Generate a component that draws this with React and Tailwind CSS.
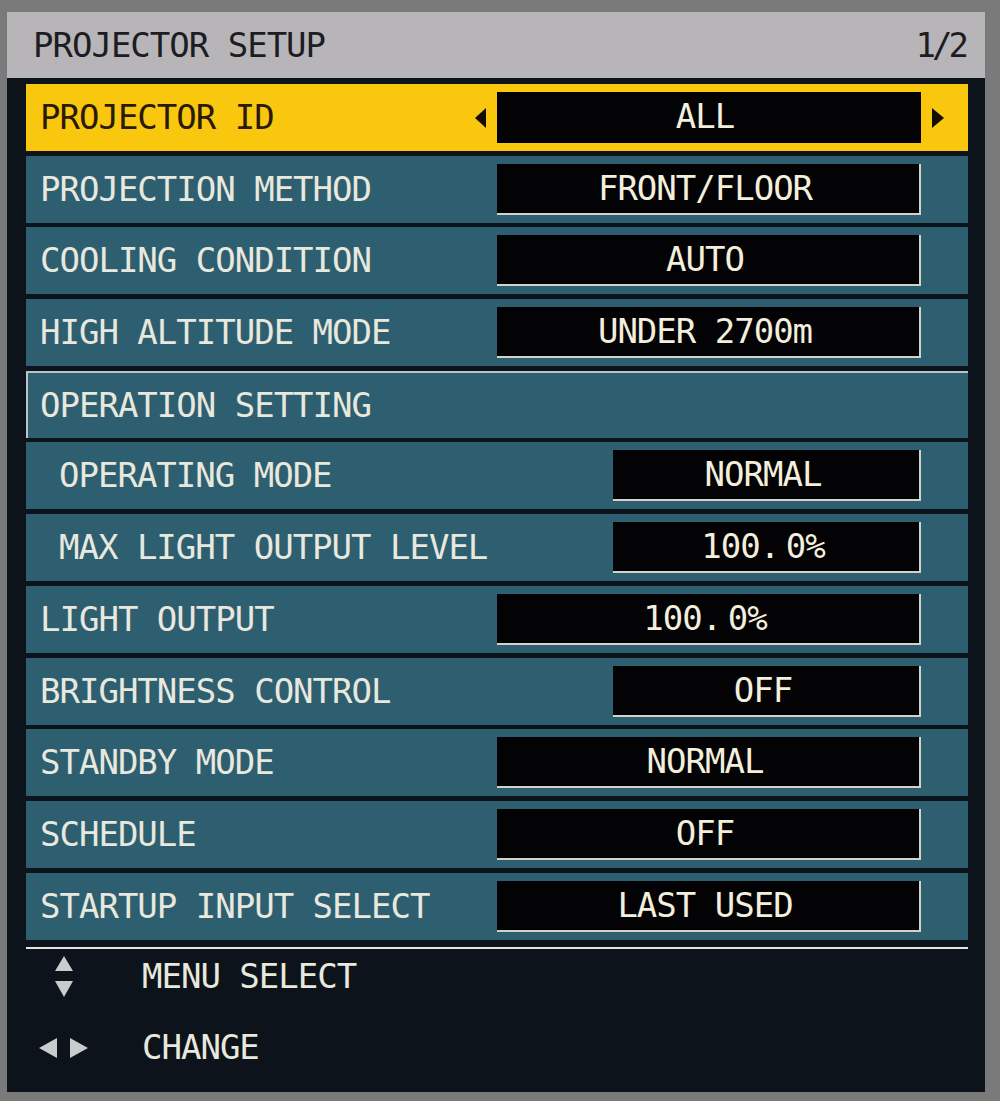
const font = { fontFamily: '"DejaVu Sans Mono", "Liberation Mono", monospace' };

const rows = [
  { label: "PROJECTOR ID", value: "ALL", active: true },
  { label: "PROJECTION METHOD", value: "FRONT/FLOOR" },
  { label: "COOLING CONDITION", value: "AUTO" },
  { label: "HIGH ALTITUDE MODE", value: "UNDER 2700m" },
  { label: "OPERATION SETTING", header: true },
  { label: "OPERATING MODE", value: "NORMAL", sub: true, narrow: true },
  { label: "MAX LIGHT OUTPUT LEVEL", value: "100. 0%", sub: true, narrow: true, tight: true },
  { label: "LIGHT OUTPUT", value: "100. 0%", tight: true },
  { label: "BRIGHTNESS CONTROL", value: "OFF", narrow: true },
  { label: "STANDBY MODE", value: "NORMAL" },
  { label: "SCHEDULE", value: "OFF" },
  { label: "STARTUP INPUT SELECT", value: "LAST USED" },
];

function Tri({ dir }) {
  const pts = {
    left: "11,0 11,20 0,10",
    right: "0,0 0,20 12,10",
  };
  return (
    <svg width="12" height="20" viewBox="0 0 12 20" className="block">
      <polygon points={pts[dir]} fill="#120c04" />
    </svg>
  );
}

function Row({ row }) {
  if (row.header) {
    return (
      <div className="h-[67px] flex items-center bg-[#2e5f70] border-t-2 border-l-2 border-[#b9c4c6] pl-[12px] text-[#e8e8de]">
        {row.label}
      </div>
    );
  }
  return (
    <div
      className={
        "h-[67px] flex items-center " +
        (row.active ? "bg-[#f9c80e] text-[#2a1905]" : "bg-[#2e5f70] text-[#e8e8de]")
      }
    >
      <div className={"flex-1 " + (row.sub ? "pl-[33px]" : "pl-[14px]")}>{row.label}</div>
      <div className="flex items-center">
        <div className="w-[22px]">{row.active && <Tri dir="left" />}</div>
        <div
          className={
            "h-[51px] flex items-center justify-center pr-[6px] bg-[#030306] text-[#f3efdc] border-b-2 border-r-2 " +
            (row.active ? "border-[#030306] " : "border-[#d2d3c8] ") +
            (row.narrow ? "w-[308px] " : "w-[424px] ") +
            (row.tight ? "[word-spacing:-13px]" : "")
          }
        >
          {row.value}
        </div>
        <div className="w-[47px] pl-[11px]">{row.active && <Tri dir="right" />}</div>
      </div>
    </div>
  );
}

export default function App() {
  return (
    <div className="w-[1000px] h-[1101px] bg-[#7a7a7a] pt-[12px] pl-[7px]" style={font}>
      <div className="w-[978px] h-[1080px] bg-[#0d131a] flex flex-col text-[34px] tracking-[-1px]">
        <div className="h-[66px] bg-[#b7b5b8] flex items-center justify-between pl-[26px] pr-[20px] text-[#1c1c22]">
          <span>PROJECTOR SETUP</span>
          <span className="tracking-[-4px]">1/2</span>
        </div>

        <div className="ml-[19px] mr-[17px] mt-[6px] flex flex-col gap-[4.7px]">
          {rows.map((r) => (
            <Row key={r.label} row={r} />
          ))}
        </div>

        <div className="ml-[19px] mr-[17px] mt-[7px] h-[2px] bg-[#e2e4e0]" />

        <div className="flex flex-col text-[#e8e8de]">
          <div className="h-[56px] flex items-center">
            <div className="w-[49px] ml-[32px] flex justify-center">
              <svg width="18" height="42" viewBox="0 0 18 42" className="block">
                <polygon points="9,0 18,15 0,15" fill="#c9cccc" />
                <polygon points="0,25 18,25 9,41" fill="#c9cccc" />
              </svg>
            </div>
            <span className="ml-[54px]">MENU SELECT</span>
          </div>
          <div className="h-[56px] mt-[15px] flex items-center">
            <div className="w-[49px] ml-[32px] flex justify-between items-center">
              <svg width="18" height="20" viewBox="0 0 18 20" className="block">
                <polygon points="18,0 18,20 0,10" fill="#c9cccc" />
              </svg>
              <svg width="18" height="20" viewBox="0 0 18 20" className="block">
                <polygon points="0,0 0,20 18,10" fill="#c9cccc" />
              </svg>
            </div>
            <span className="ml-[54px]">CHANGE</span>
          </div>
        </div>
      </div>
    </div>
  );
}
